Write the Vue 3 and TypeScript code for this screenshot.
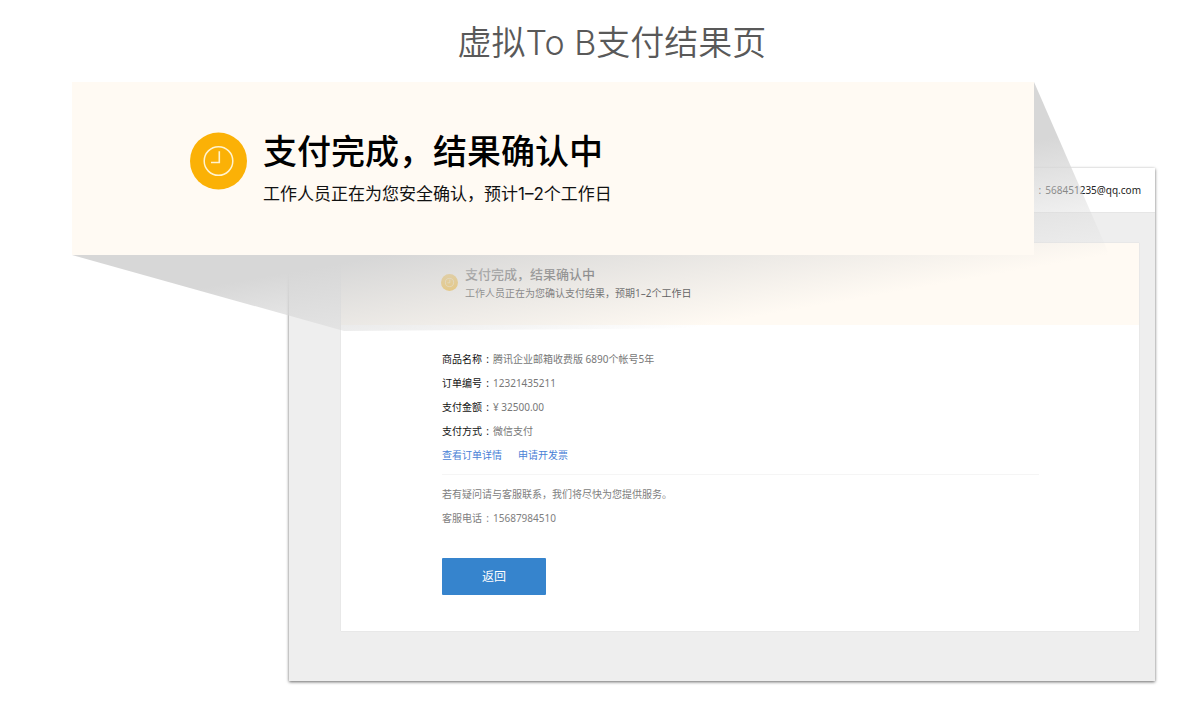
<script setup lang="ts">
interface Detail {
  label: string
  value: string
}

const details: Detail[] = [
  { label: '商品名称', value: '腾讯企业邮箱收费版 6890个帐号5年' },
  { label: '订单编号', value: '12321435211' },
  { label: '支付金额', value: '¥ 32500.00' },
  { label: '支付方式', value: '微信支付' },
]
</script>

<template>
  <main class="page" lang="zh-CN">
    <h1 class="title">虚拟To B支付结果页</h1>

    <div class="scene">
      <section class="window">
        <header class="topbar">
          <span><span class="colon">:</span>568451235@qq.com</span>
        </header>
        <div class="panel">
          <div class="banner">
            <svg class="badge" viewBox="0 0 58 58" aria-hidden="true">
              <circle cx="29" cy="29" r="29" fill="#fbb106" />
              <circle cx="29" cy="29" r="14" fill="none" stroke="#fff3d0" stroke-width="2" />
              <path d="M30 19v11h-8" fill="none" stroke="#fff3d0" stroke-width="2" />
            </svg>
            <div>
              <h3 class="banner-title">支付完成，结果确认中</h3>
              <p class="banner-note">工作人员正在为您确认支付结果，预期1–2个工作日</p>
            </div>
          </div>

          <div class="content">
            <dl class="details">
              <div v-for="item in details" :key="item.label" class="row">
                <dt>{{ item.label }}<span class="colon">:</span></dt>
                <dd>{{ item.value }}</dd>
              </div>
            </dl>
            <nav class="links">
              <a href="#order">查看订单详情</a>
              <a href="#invoice">申请开发票</a>
            </nav>
            <div class="help">
              <p>若有疑问请与客服联系，我们将尽快为您提供服务。</p>
              <p>客服电话<span class="colon">:</span>15687984510</p>
            </div>
            <button type="button" class="back">返回</button>
          </div>
        </div>
      </section>

      <div class="cast" aria-hidden="true"></div>

      <section class="callout">
        <svg class="clock" viewBox="0 0 58 58" aria-hidden="true">
          <circle cx="28.5" cy="29" r="28.5" fill="#fbb106" />
          <circle cx="28.5" cy="29" r="14.3" fill="none" stroke="#fff3d0" stroke-width="1.5" />
          <path d="M29.3 19.3v11.2h-8.3" fill="none" stroke="#fff3d0" stroke-width="1.6" />
        </svg>
        <div>
          <h2 class="callout-title">支付完成，结果确认中</h2>
          <p class="callout-note">工作人员正在为您安全确认，预计1–2个工作日</p>
        </div>
      </section>
    </div>
  </main>
</template>

<style>
body {
  background: #fff;
}
</style>

<style scoped>
h1, h2, h3, p, dl, dd {
  margin: 0;
}

.page {
  font-family: "Noto Sans", "Noto Sans CJK SC", sans-serif;
  padding-bottom: 22px;
}

.title {
  height: 82px;
  padding-left: 24px;
  box-sizing: border-box;
  font: 350 34px/86px Inter, "Noto Sans CJK SC", sans-serif;
  text-align: center;
  color: #595959;
}

.scene {
  position: relative;
  padding: 86px 45px 0 289px;
}

.window {
  background: #eee;
  box-shadow: 0 1px 3px rgba(0, 0, 0, 0.6);
  padding-bottom: 50px;
}

.topbar {
  display: flex;
  justify-content: flex-end;
  align-items: center;
  height: 44px;
  padding: 0 14px;
  background: #fff;
  border-bottom: 1px solid #e6e6e6;
  font-size: 10px;
  color: #222;
}

.panel {
  margin: 30px 16px 0 52px;
  background: #fff;
  box-shadow: 0 0 1px rgba(0, 0, 0, 0.15);
}

.banner {
  display: flex;
  gap: 7px;
  height: 82px;
  box-sizing: border-box;
  padding: 22px 0 0 100px;
  background: #fffaf3;
}

.badge {
  width: 17px;
  height: 17px;
  margin-top: 9px;
}

.banner-title {
  font: 500 13px/18px Inter, "Noto Sans CJK SC", sans-serif;
  color: #333;
}

.banner-note {
  font: 400 10px/20px "Noto Sans", "Noto Sans CJK SC", sans-serif;
  color: #333;
}

.content {
  padding: 22px 100px 36px 101px;
  font-size: 10px;
  line-height: 24px;
}

.row {
  display: flex;
}

.row dt {
  color: #111;
}

.row dd {
  color: #777;
}

.colon {
  display: inline-block;
  width: 11px;
  text-align: center;
}

.links {
  display: flex;
  gap: 16px;
  padding-bottom: 7px;
  border-bottom: 1px solid #f5f5f5;
}

.links a {
  color: #4a7fd6;
  text-decoration: none;
}

.help {
  padding: 7px 0 28px;
  color: #808080;
}

.back {
  display: block;
  width: 104px;
  height: 37px;
  padding: 0;
  border: 0;
  border-radius: 1px;
  background: #3684cd;
  color: #fff;
  font: 400 12px/37px "Noto Sans", "Noto Sans CJK SC", sans-serif;
}

.cast {
  position: absolute;
  top: 0;
  left: 72px;
  right: 60px;
  height: 249px;
  background: linear-gradient(170deg, #d7d7d7 225px, rgba(215, 215, 215, 0) 350px);
  clip-path: polygon(0 173px, calc(100% - 106px) 0, 100% 243px, 272px 249px);
}

.callout {
  position: absolute;
  top: 0;
  left: 72px;
  right: 166px;
  display: flex;
  gap: 15px;
  height: 173px;
  box-sizing: border-box;
  padding: 50px 0 0 118px;
  background: #fffaf3;
}

.clock {
  flex: none;
  width: 58px;
  height: 58px;
}

.callout-title {
  font: 500 34px/40px Inter, "Noto Sans CJK SC", sans-serif;
  color: #000;
}

.callout-note {
  margin-top: 8px;
  font: 400 17px/28px Inter, "Noto Sans CJK SC", sans-serif;
  color: #111;
}
</style>
